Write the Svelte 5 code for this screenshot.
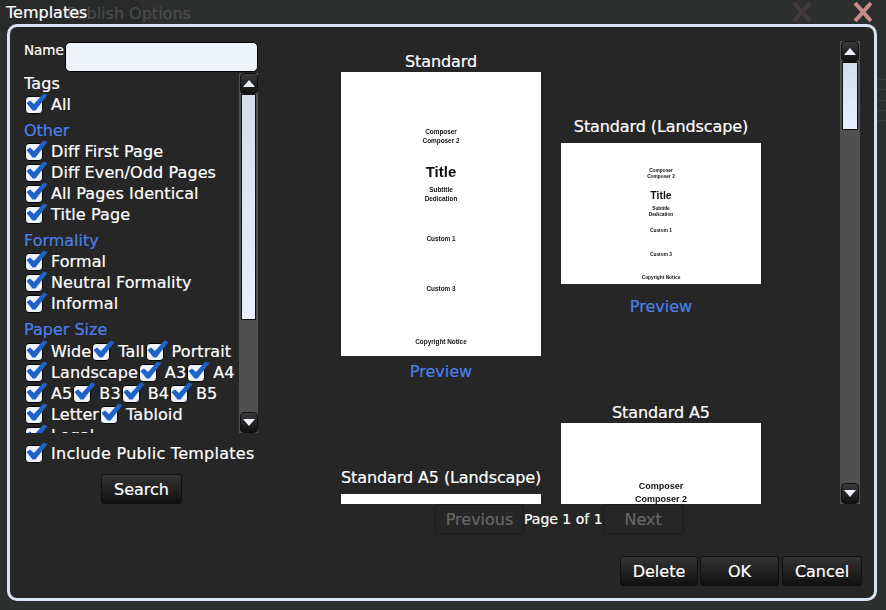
<script>
    const topTags = ['Diff First Page', 'Diff Even/Odd Pages', 'All Pages Identical', 'Title Page'];
    const formality = ['Formal', 'Neutral Formality', 'Informal'];
    const paperRows = [
        ['Wide', 'Tall', 'Portrait'],
        ['Landscape', 'A3', 'A4'],
        ['A5', 'B3', 'B4', 'B5'],
        ['Letter', 'Tabloid'],
        ['Legal']
    ];
    let name = $state('');

    const templates = [
        { title: 'Standard', kind: 'portrait' },
        { title: 'Standard (Landscape)', kind: 'landscape' },
        { title: 'Standard A5 (Landscape)', kind: 'landscape' },
        { title: 'Standard A5', kind: 'portrait a5' }
    ];
</script>

{#snippet check(label)}
    <label class="check">
        <span class="box">
            <svg width="23" height="20" viewBox="0 0 23 20">
                <path d="M1.5 10 L5 7.5 L9 11 L18.5 0.5 L22.5 2 L10.5 17.5 L7.5 17.5 Z" fill="#1f62c8" />
            </svg>
        </span>
        <span class="check-text">{label}</span>
    </label>
{/snippet}

{#snippet arrow(up)}
    <div class="arrow">
        <svg width="12" height="7" viewBox="0 0 12 7">
            <path d={up ? 'M6 0 L12 7 L0 7 Z' : 'M0 0 L12 0 L6 7 Z'} fill="#eef2fa" />
        </svg>
    </div>
{/snippet}

{#snippet sheet(kind)}
    <div class="sheet {kind}">
        <div class="line composer">Composer</div>
        <div class="line composer">Composer 2</div>
        <div class="doc-title">Title</div>
        <div class="line small">Subtitle</div>
        <div class="line small">Dedication</div>
        <div class="line small custom1">Custom 1</div>
        <div class="line small custom3">Custom 3</div>
        <div class="line small copyright">Copyright Notice</div>
    </div>
{/snippet}

<div class="page">
    <div class="behind">
        <div class="behind-tab"></div>
        <div class="behind-lines"></div>
        <span class="behind-title">Publish Options</span>
        <svg class="x faint" width="22" height="22" viewBox="0 0 22 22"><path d="M3 2 L19 20 M19 2 L3 20" /></svg>
        <svg class="x" width="22" height="22" viewBox="0 0 22 22"><path d="M3 2 L19 20 M19 2 L3 20" /></svg>
    </div>
    <div class="heading">Templates</div>

    <div class="dialog">
        <div class="main">
            <aside class="filters">
                <div class="name-row">
                    <span>Name</span>
                    <input bind:value={name} />
                </div>
                <div class="tags">
                    <div class="tag-list">
                        <div class="tag-head">Tags</div>
                        {@render check('All')}
                        <div class="group">Other</div>
                        {#each topTags as t}
                            {@render check(t)}
                        {/each}
                        <div class="group">Formality</div>
                        {#each formality as t}
                            {@render check(t)}
                        {/each}
                        <div class="group paper">Paper Size</div>
                        {#each paperRows as row}
                            <div class="row">
                                {#each row as t}
                                    {@render check(t)}
                                {/each}
                            </div>
                        {/each}
                    </div>
                    <div class="scrollbar">
                        {@render arrow(true)}
                        <div class="track"><div class="thumb left-thumb"></div></div>
                        {@render arrow(false)}
                    </div>
                </div>
                <div class="public">{@render check('Include Public Templates')}</div>
                <button class="search">Search</button>
            </aside>

            <section class="results">
                <div class="scroller">
                    <div class="cards">
                        {#each templates as t}
                            <div class="card">
                                <div class="card-title">{t.title}</div>
                                {@render sheet(t.kind)}
                                <div class="preview">Preview</div>
                            </div>
                        {/each}
                    </div>
                    <div class="scrollbar right">
                        {@render arrow(true)}
                        <div class="track"><div class="thumb right-thumb"></div></div>
                        {@render arrow(false)}
                    </div>
                </div>
                <div class="pager">
                    <button class="ghost prev" disabled>Previous</button>
                    <span>Page 1 of 1</span>
                    <button class="ghost next" disabled>Next</button>
                </div>
            </section>
        </div>
        <div class="actions">
            <button class="delete">Delete</button>
            <button class="ok">OK</button>
            <button class="cancel">Cancel</button>
        </div>
    </div>
</div>

<style>
    :global(body) {
        background: #2d2f2f;
        font-family: "DejaVu Sans", sans-serif;
        color: #fff;
    }
    .page {
        position: relative;
        width: 886px;
        height: 610px;
        overflow: hidden;
        box-sizing: border-box;
        padding: 24px 9px 9px 7px;
        -webkit-text-stroke: 0.2px;
    }
    .behind {
        position: absolute;
        inset: 0;
    }
    .behind-tab {
        position: absolute;
        left: 0;
        top: 0;
        width: 142px;
        height: 30px;
        background: #282929;
        border-radius: 0 10px 0 0;
    }
    .behind-lines {
        position: absolute;
        right: 0;
        top: 79px;
        width: 12px;
        height: 42px;
        background: repeating-linear-gradient(#3a3c3c 0 1px, transparent 1px 10.25px);
    }
    .behind-title {
        position: absolute;
        left: 67px;
        top: 4px;
        font-size: 16px;
        color: #4a4c4c;
    }
    .x {
        position: absolute;
        top: 1px;
        left: 852px;
    }
    .x.faint {
        left: 791px;
    }
    .x path {
        stroke: #c98b8b;
        stroke-width: 4;
        fill: none;
    }
    .x.faint path {
        stroke: #443a3a;
    }
    .heading {
        position: absolute;
        left: 6px;
        top: 3px;
        font-size: 16px;
    }
    .dialog {
        position: relative;
        box-sizing: border-box;
        height: 577px;
        border: 3px solid #d9e2f0;
        border-radius: 10px;
        background: #262626;
        padding: 15px 12px 12px 14px;
        display: flex;
        flex-direction: column;
    }
    .main {
        display: flex;
        flex: 1;
        min-height: 0;
    }
    .filters {
        width: 234px;
        flex: none;
    }
    .name-row {
        display: flex;
        align-items: flex-start;
        font-size: 13.5px;
        height: 31px;
    }
    .name-row input {
        width: 193px;
        height: 30px;
        box-sizing: border-box;
        margin: 0 0 0 1px;
        border: 1px solid #000;
        border-radius: 5px;
        background: #eef2fb;
    }
    .tags {
        display: flex;
        height: 360px;
        overflow: hidden;
    }
    .tag-list {
        width: 215px;
        flex: none;
        overflow: hidden;
        padding-top: 1px;
    }
    .tag-head, .check-text {
        font-size: 16px;
        letter-spacing: 0.1px;
    }
    .tag-head {
        line-height: 20px;
    }
    .group {
        color: #4a80e8;
        font-size: 16px;
        line-height: 21px;
        margin-top: 5px;
    }
    .group.paper {
        margin-bottom: 1px;
    }
    .check {
        display: inline-flex;
        align-items: center;
        height: 21px;
        white-space: nowrap;
    }
    .tag-list > .check {
        display: flex;
    }
    .row {
        display: flex;
        height: 21px;
        white-space: nowrap;
    }
    .box {
        position: relative;
        width: 18px;
        height: 18px;
        box-sizing: border-box;
        margin: 0 8px 0 1px;
        border: 1px solid #000;
        border-radius: 4px;
        background: #eef2fb;
        flex: none;
    }
    .box svg {
        position: absolute;
        left: -1px;
        top: -4px;
    }
    .scrollbar {
        display: flex;
        flex-direction: column;
        width: 19px;
        background: #505050;
        flex: none;
    }
    .scrollbar.right {
        width: 20px;
    }
    .arrow {
        height: 21px;
        flex: none;
        margin-left: 1px;
        width: 18px;
        display: flex;
        align-items: center;
        justify-content: center;
        border: 1px solid #111;
        box-sizing: border-box;
        border-radius: 4px;
        background: linear-gradient(#3a3a3a, #111);
    }
    .track {
        flex: 1;
        padding: 0 2px;
    }
    .thumb {
        box-sizing: border-box;
        border: 1px solid #111;
        background: linear-gradient(#d5dcea, #e9f0fd);
    }
    .left-thumb {
        height: 226px;
    }
    .right-thumb {
        height: 68px;
    }
    .public {
        margin-top: 10px;
    }
    .public .check {
        display: flex;
    }
    .public .check-text {
        letter-spacing: 0.27px;
    }
    button {
        font-family: inherit;
        font-size: 16px;
        color: #fff;
        box-sizing: border-box;
        height: 30px;
        padding: 0;
        border: 1px solid #111;
        border-radius: 3px;
        background: linear-gradient(#333, #111);
        -webkit-text-stroke: 0.2px;
    }
    .search {
        display: block;
        width: 81px;
        margin: 10px 0 0 77px;
    }
    .results {
        flex: 1;
        min-width: 0;
        display: flex;
        flex-direction: column;
    }
    .scroller {
        display: flex;
        height: 463px;
        margin-top: -1px;
        padding-left: 83px;
    }
    .cards {
        width: 499px;
        flex: none;
        overflow: hidden;
        display: grid;
        grid-template-columns: 200px 200px;
        column-gap: 20px;
        row-gap: 21px;
        align-items: center;
        align-content: start;
        padding-top: 11px;
        box-sizing: border-box;
    }
    .card {
        width: 200px;
        text-align: center;
        padding-bottom: 1px;
    }
    .card-title {
        font-size: 16px;
        line-height: 19px;
        white-space: nowrap;
        letter-spacing: -0.1px;
    }
    .preview {
        color: #4a80e8;
        font-size: 16px;
        line-height: 19px;
        margin-top: 6px;
    }
    .sheet {
        position: relative;
        background: #fff;
        color: #111;
        font-family: "Liberation Sans", sans-serif;
        font-weight: bold;
        width: 200px;
        overflow: hidden;
        box-sizing: border-box;
        margin-top: 1px;
        -webkit-text-stroke: 0;
    }
    .sheet > div {
        filter: blur(0.4px);
    }
    .sheet.portrait {
        height: 284px;
        padding-top: 55px;
    }
    .sheet.landscape {
        height: 141px;
        padding-top: 25px;
        margin: 7px 0 13px;
    }
    .line {
        font-size: 6.4px;
        line-height: 9px;
    }
    .doc-title {
        font-size: 15px;
        line-height: 18px;
        margin: 18px 0 4px;
    }
    .landscape .line {
        font-size: 4.8px;
        line-height: 6px;
    }
    .landscape .doc-title {
        font-size: 10.5px;
        line-height: 12px;
        margin: 9px 0 5px;
    }
    .a5 .composer {
        font-size: 9px;
        line-height: 13px;
    }
    .sheet.a5 {
        padding-top: 57px;
    }
    .custom1, .custom3, .copyright {
        position: absolute;
        left: 0;
        right: 0;
    }
    .portrait .custom1 { top: 162px; }
    .portrait .custom3 { top: 212px; }
    .portrait .copyright { top: 265px; }
    .landscape .custom1 { top: 85px; }
    .landscape .custom3 { top: 109px; }
    .landscape .copyright { top: 132px; }
    .pager {
        display: flex;
        align-items: center;
        font-size: 14px;
        padding-left: 177px;
        height: 30px;
    }
    .ghost {
        background: none;
        border: 1px solid #1c1c1c;
        color: #666;
    }
    .prev { width: 89px; }
    .next { width: 81px; }
    .actions {
        display: flex;
        margin-top: auto;
        justify-content: flex-end;
        gap: 2px;
    }
    .delete { width: 78px; }
    .ok { width: 79px; }
    .cancel { width: 80px; margin-left: 1px; }
</style>
